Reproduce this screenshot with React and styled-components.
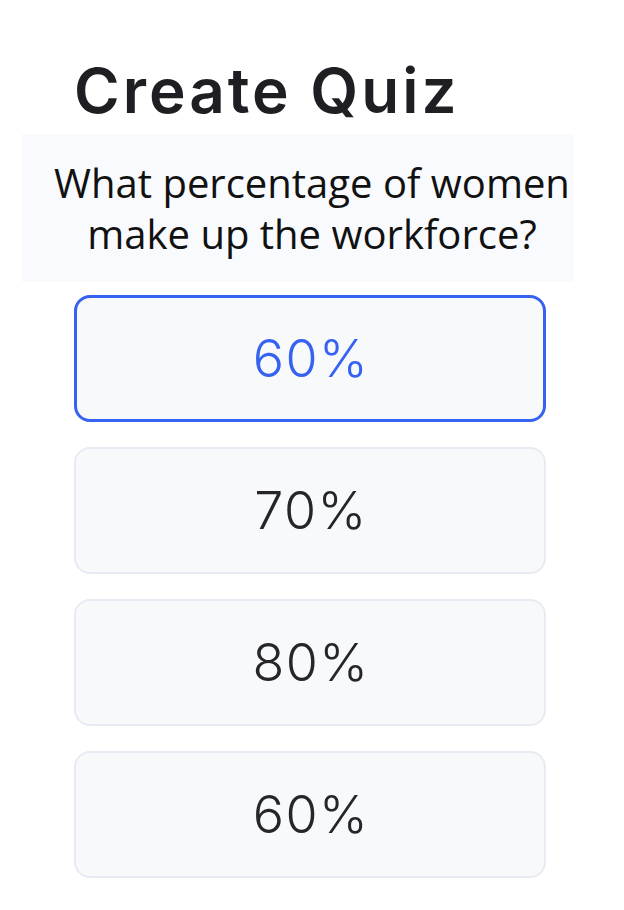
import React from 'react';
import styled, { createGlobalStyle } from 'styled-components';

const GlobalStyle = createGlobalStyle`
  html, body {
    margin: 0;
    padding: 0;
    background: #ffffff;
  }
`;

const Page = styled.div`
  width: 624px;
  height: 910px;
  display: flex;
  flex-direction: column;
  background: #ffffff;
  overflow: hidden;
`;

const Title = styled.h1`
  margin: 56px 0 0 74px;
  font-family: 'Inter', 'Liberation Sans', sans-serif;
  font-weight: 600;
  font-size: 62px;
  line-height: 70px;
  color: #1f1f23;
  letter-spacing: 3px;
`;

const QuestionBox = styled.div`
  margin: 8px 0 0 22px;
  width: 552px;
  height: 148px;
  display: flex;
  align-items: center;
  justify-content: center;
  padding-left: 28px;
  box-sizing: border-box;
  background: #f9fafd;
`;

const Question = styled.p`
  margin: 0;
  text-align: center;
  white-space: nowrap;
  font-family: 'Open Sans', 'Noto Sans', sans-serif;
  font-size: 40px;
  line-height: 51px;
  color: #111111;
`;

const Options = styled.div`
  margin: 13px 0 0 74px;
  width: 472px;
  display: flex;
  flex-direction: column;
  gap: 25px;
`;

const Option = styled.button`
  height: 127px;
  width: 100%;
  box-sizing: border-box;
  display: flex;
  align-items: center;
  justify-content: center;
  border-radius: 16px;
  background: #f8f9fb;
  border: ${(p) => (p.$selected ? '3px solid #3562f1' : '2px solid #e9eaf3')};
  color: ${(p) => (p.$selected ? '#3562f1' : '#26262a')};
  font-family: 'Inter', 'Liberation Sans', sans-serif;
  font-weight: 300;
  font-size: 52px;
  letter-spacing: 1.5px;
  padding: 0 0 0 2px;
  cursor: pointer;
`;

const options = [
  { label: '60%', selected: true },
  { label: '70%' },
  { label: '80%' },
  { label: '60%' },
];

const App = () => {
  return (
    <Page>
      <GlobalStyle />
      <Title>Create Quiz</Title>
      <QuestionBox>
        <Question>
          What percentage of women
          <br />
          make up the workforce?
        </Question>
      </QuestionBox>
      <Options>
        {options.map((option, i) => (
          <Option key={i} $selected={option.selected}>
            {option.label}
          </Option>
        ))}
      </Options>
    </Page>
  );
};

export default App;
